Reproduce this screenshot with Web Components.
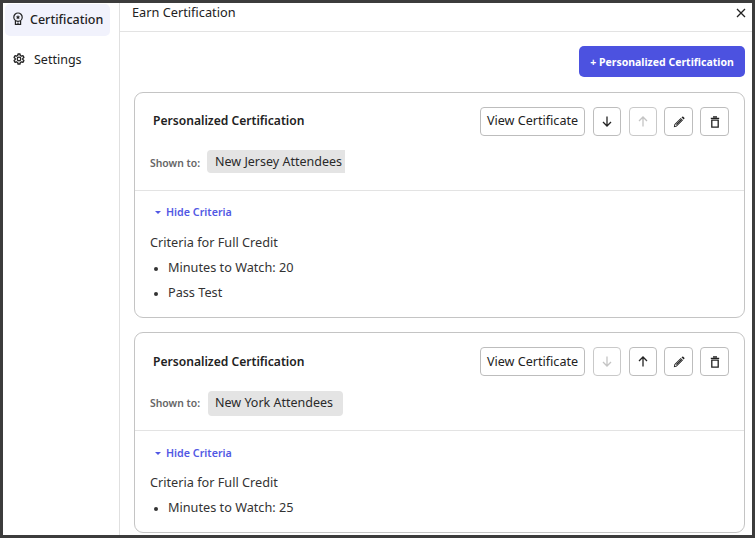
<!DOCTYPE html>
<html><head><meta charset="utf-8"><style>
html,body{margin:0;height:100%;overflow:hidden}
body{background:#3c3c3c;font-family:"Noto Sans","Open Sans",sans-serif;color:#222}
</style></head><body>
<cert-app></cert-app>
<script>
const I={
 medal:'<svg width="12" height="14" viewBox="0 0 12 14" fill="none" stroke="#222" stroke-width="1.200"><circle cx="6" cy="5.200" r="4.200"/><path d="M6 3l.7 1.400 1.500.2-1.100 1 .3 1.500L6 6.400l-1.400.7.3-1.500-1.100-1 1.500-.2z" fill="#222" stroke="none"/><path d="M3.400 9v3.400h5.200V9M6 10.500v1.900"/></svg>',
 gear:'<svg width="12" height="12" viewBox="0 0 24 24" fill="none" stroke="#222" stroke-width="2.600" stroke-linejoin="round"><circle cx="12" cy="12" r="3.600"/><path d="M10 2h4l.6 3 2.300 1.300 2.900-1 2 3.500-2.300 2v2.400l2.300 2-2 3.500-2.900-1-2.300 1.300-.6 3h-4l-.6-3-2.300-1.300-2.900 1-2-3.500 2.300-2v-2.400l-2.300-2 2-3.500 2.900 1L9.400 5z"/></svg>',
 down:'<svg width="10" height="11" viewBox="0 0 10 11" fill="none" stroke="currentColor" stroke-width="1.300"><path d="M5 .5v9.500M1 6l4 4 4-4"/></svg>',
 up:'<svg width="10" height="11" viewBox="0 0 10 11" fill="none" stroke="currentColor" stroke-width="1.300"><path d="M5 10.500V1M1 5l4-4 4 4"/></svg>',
 pen:'<svg width="12" height="12" viewBox="0 0 12 12" fill="currentColor"><path d="M.8 11.200l.6-2.900 6.300-6.300 2.300 2.300-6.300 6.300zM2.200 8.800l-.3 1.300 1.300-.3 5.500-5.500-1-1z"/><path d="M3 8.200L7.700 3.500l.8.8L3.800 9z"/><path d="M8.500 1.300l.7-.6a.8.8 0 0 1 1.100 0l1 1a.8.8 0 0 1 0 1.100l-.7.7z"/></svg>',
 trash:'<svg width="10" height="12" viewBox="0 0 10 12" fill="none" stroke="currentColor" stroke-width="1.300"><path d="M.8 2.400h8.400M3 .8h4"/><path d="M1.800 4.200h6.400v7H1.800z"/></svg>',
 x:'<svg width="10" height="10" viewBox="0 0 10 10" stroke="#222" stroke-width="1.300"><path d="M1 1l8 8M9 1l-8 8"/></svg>'
};
class Base extends HTMLElement{
 constructor(){super();this.attachShadow({mode:'open'});this.shadowRoot.innerHTML=this.render()}
 render(){return ''}
}
customElements.define('nav-item',class extends Base{
 render(){return `<style>:host{display:flex;align-items:center;box-sizing:border-box;height:32px;padding-bottom:2px;border-radius:5px;font-size:12.500px;gap:var(--g,6px);padding-left:var(--pl,9px)}
 :host([active]){background:#f1f2fc;color:#222;font-weight:500}
 svg{display:block;flex:none}</style>${I[this.getAttribute('icon')]}<slot></slot>`}
});
customElements.define('side-bar',class extends Base{
 render(){return `<style>:host{display:flex;flex-direction:column;width:116px;flex:none;border-right:1px solid #e0e0e0}
 .w{padding:1px 9px 0 2px;display:flex;flex-direction:column;gap:8px}</style><div class="w"><slot></slot></div>`}
});
customElements.define('icon-btn',class extends Base{
 render(){const d=this.hasAttribute('disabled');return `<style>:host{display:flex;align-items:center;justify-content:center;width:27px;height:27px;border:1px solid ${d?'#c9c9c9':'#bdbdbd'};border-radius:4px;color:${d?'#c4c4c4':'#222'};background:#fff}
 :host([narrow]){width:26px;margin-left:1px}svg{display:block}</style>${I[this.getAttribute('icon')]}`}
});
customElements.define('view-btn',class extends Base{
 render(){return `<style>:host{display:flex;align-items:center;justify-content:center;width:103px;height:27px;border:1px solid #bdbdbd;border-radius:4px;font-size:12.600px;background:#fff;white-space:nowrap}
 span{margin-top:var(--vt,-2px)}</style><span><slot></slot></span>`}
});
customElements.define('cert-card',class extends Base{
 render(){
  const a=this.getAttribute('first')!==null;
  const chipW=this.getAttribute('chip');
  const items=this.getAttribute('items').split('|').map(t=>`<li>${t}</li>`).join('');
  return `<style>
  :host{display:block;flex:none;border:1px solid #c4c4c4;border-radius:9px;background:#fff;overflow:hidden}
  .head{display:flex;flex-direction:column;border-bottom:1px solid #e3e3e3;box-sizing:border-box;height:98px;padding:14px 15px 0 18px}
  .top{display:flex;align-items:center;justify-content:space-between;height:29px}
  .title{font-size:12.100px;font-weight:600;color:#222;margin-top:${a?'-2px':'-1px'}}
  .btns{display:flex;gap:7px}
  .row{display:flex;align-items:center;margin-top:${a?'14px':'15px'};margin-left:-3px}
  .lbl{font-size:10.400px;font-weight:600;color:#666;width:${a?'57px':'58px'};flex:none;position:relative;top:${a?'1px':'-1px'}}
  .chip{display:block;font-size:12.500px;background:#e4e4e4;padding:0 ${a?'8px':'7px'};height:${a?'23px':'25px'};line-height:${a?'23px':'24px'};box-sizing:border-box;border-radius:${a?'4px 0 0 4px':'4px'};white-space:nowrap;color:#2a2a2a}
  .body{padding:${a?'14px':'15px'} 15px ${a?'16px':'16px'} 15px}
  .hide{display:flex;align-items:center;font-size:10.700px;font-weight:600;color:#5258e4;height:14px;padding-left:5px;gap:5px}
  .hide i{display:block;width:0;height:0;border:3px solid transparent;border-top:3.500px solid #5258e4;border-bottom:0}
  .crit{font-size:12.700px;margin-top:${a?'14px':'13px'};line-height:18px;color:#333}
  ul{margin:7px 0 0;padding:0 0 0 18px;font-size:12.700px;color:#333}
  li{line-height:18px;margin-bottom:7px}
  li::marker{font-size:10px}
  li:last-child{margin-bottom:0}
  </style>
  <div class="head"><div class="top"><span class="title">Personalized Certification</span><div class="btns">
   <view-btn style="--vt:${a?'-2px':'-1px'}">View Certificate</view-btn>
   <icon-btn narrow icon="down" ${a?'':'disabled'}></icon-btn>
   <icon-btn narrow icon="up" ${a?'disabled':''}></icon-btn>
   <icon-btn icon="pen"></icon-btn><icon-btn icon="trash"></icon-btn></div></div>
   <div class="row"><span class="lbl">Shown to:</span><span class="chip" style="width:${chipW}px">${this.getAttribute('who')}</span></div></div>
  <div class="body"><div class="hide"><i></i>Hide Criteria</div><div class="crit">Criteria for Full Credit</div><ul>${items}</ul></div>`}
});
customElements.define('main-panel',class extends Base{
 render(){return `<style>:host{display:flex;flex-direction:column;flex:1;min-width:0;overflow:hidden}
 .hd{display:flex;justify-content:space-between;align-items:center;height:28px;border-bottom:1px solid #e3e3e3;padding:0 6px 0 12px;font-size:12.750px;flex:none}
 .hd span{margin-top:-11px}.hd svg{margin-top:-9px;display:block}
 .c{padding:14px 7px 0 14px;display:flex;flex-direction:column;gap:14px}
 .add{align-self:flex-end;width:166px;height:31px;border-radius:5px;background:#4c52e0;color:#fff;font-size:10.500px;font-weight:700;display:flex;align-items:center;justify-content:center;flex:none;margin-bottom:1px}
 </style><div class="hd"><span>Earn Certification</span>${I.x}</div>
 <div class="c"><div class="add">+ Personalized Certification</div><slot></slot></div>`}
});
customElements.define('cert-app',class extends Base{
 render(){return `<style>:host{display:flex;position:fixed;inset:3px;background:#fff;overflow:hidden}</style>
 <side-bar><nav-item icon="medal" active style="--pl:7px;--g:6px">Certification</nav-item><nav-item icon="gear" style="--pl:8px;--g:9px">Settings</nav-item></side-bar>
 <main-panel>
 <cert-card first who="New Jersey Attendees" chip="138" items="Minutes to Watch: 20|Pass Test"></cert-card>
 <cert-card who="New York Attendees" chip="135" items="Minutes to Watch: 25"></cert-card>
 </main-panel>`}
});
</script>
</body></html>
